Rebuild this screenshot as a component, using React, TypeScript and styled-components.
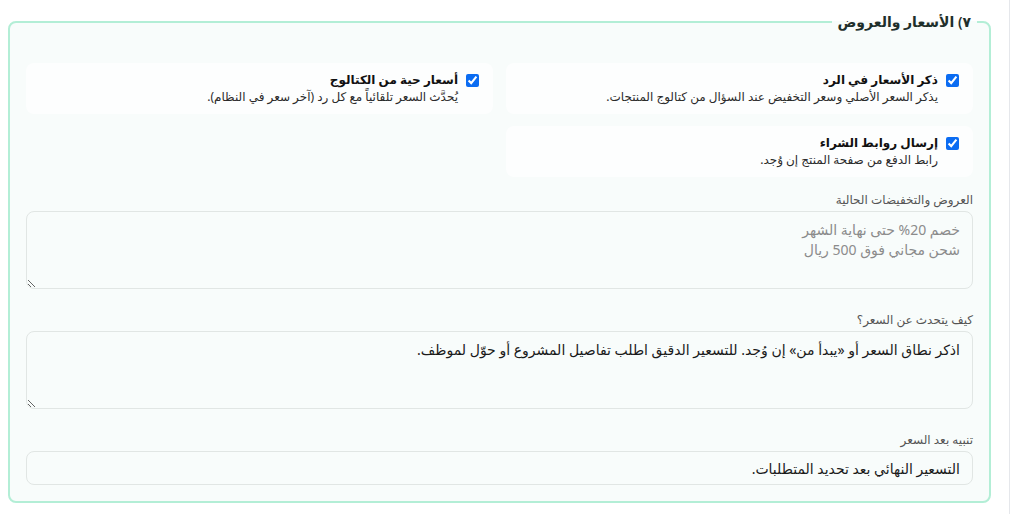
import styled, { createGlobalStyle } from "styled-components";

const GlobalStyle = createGlobalStyle`
  html, body {
    margin: 0;
    background: #ffffff;
  }
  body {
    font-family: "Noto Sans", "DejaVu Sans", sans-serif;
    color: #1f2937;
  }
`;

const options = [
  {
    title: "ذكر الأسعار في الرد",
    desc: "يذكر السعر الأصلي وسعر التخفيض عند السؤال من كتالوج المنتجات.",
  },
  {
    title: "أسعار حية من الكتالوج",
    desc: "يُحدَّث السعر تلقائياً مع كل رد (آخر سعر في النظام).",
  },
  {
    title: "إرسال روابط الشراء",
    desc: "رابط الدفع من صفحة المنتج إن وُجد.",
  },
];

const App = () => {
  return (
    <Page dir="rtl">
      <GlobalStyle />
      <Section>
        <Legend>٧) الأسعار والعروض</Legend>
        <OptionGrid>
          {options.map((opt) => (
            <OptionCard key={opt.title}>
              <Check type="checkbox" defaultChecked />
              <OptionText>
                <OptionTitle>{opt.title}</OptionTitle>
                <OptionDesc>{opt.desc}</OptionDesc>
              </OptionText>
            </OptionCard>
          ))}
        </OptionGrid>

        <Field>
          <Label>العروض والتخفيضات الحالية</Label>
          <TextArea
            placeholder={"خصم 20% حتى نهاية الشهر\nشحن مجاني فوق 500 ريال"}
          />
        </Field>

        <Field>
          <Label>كيف يتحدث عن السعر؟</Label>
          <TextArea defaultValue="اذكر نطاق السعر أو «يبدأ من» إن وُجد. للتسعير الدقيق اطلب تفاصيل المشروع أو حوّل لموظف." />
        </Field>

        <Field>
          <Label>تنبيه بعد السعر</Label>
          <Input defaultValue="التسعير النهائي بعد تحديد المتطلبات." />
        </Field>
      </Section>
    </Page>
  );
};

const Page = styled.div`
  width: 1010px;
  min-height: 514px;
  box-sizing: border-box;
  border-right: 1px solid #e5e7eb;
  padding: 12px 18px 0 8px;
`;

const Section = styled.fieldset`
  margin: 0;
  border: 2px solid #b3eed6;
  border-radius: 8px;
  background: #f8fcfb;
  padding: 31px 16px 16px;
  display: flex;
  flex-direction: column;
`;

const Legend = styled.legend`
  font-size: 14px;
  font-weight: 600;
  color: #1f2f2b;
  padding: 0 6px;
  margin-right: -4px;
  line-height: 20px;
`;

const OptionGrid = styled.div`
  display: grid;
  grid-template-columns: 1fr 1fr;
  gap: 12px 13px;
  margin-bottom: 15px;
`;

const OptionCard = styled.label`
  display: flex;
  align-items: flex-start;
  gap: 8px;
  background: #fdfefe;
  border-radius: 8px;
  padding: 9px 14px 9px;
  min-height: 30px;
`;

const Check = styled.input`
  width: 13px;
  height: 13px;
  margin: 2px 0 0;
  accent-color: #0b6cf2;
  flex-shrink: 0;
`;

const OptionText = styled.div`
  display: flex;
  flex-direction: column;
  gap: 1px;
`;

const OptionTitle = styled.div`
  font-size: 12px;
  font-weight: 700;
  color: #111;
  line-height: 16px;
`;

const OptionDesc = styled.div`
  font-size: 12px;
  color: #2b2b2b;
  line-height: 16px;
`;

const Field = styled.div`
  display: flex;
  flex-direction: column;
  gap: 3px;
  margin-bottom: 23px;

  &:last-child {
    margin-bottom: 0;
  }
`;

const Label = styled.label`
  font-size: 12px;
  color: #555;
  line-height: 16px;
`;

const TextArea = styled.textarea`
  box-sizing: border-box;
  height: 78px;
  width: 100%;
  border: 1px solid #e1e6e4;
  border-radius: 8px;
  background: #f8fcfb;
  padding: 8px 12px;
  font-family: inherit;
  font-size: 14px;
  line-height: 20px;
  color: #1a1a1a;
  resize: vertical;
  outline: none;

  &::placeholder {
    color: #8b8b8b;
  }
`;

const Input = styled.input`
  box-sizing: border-box;
  height: 34px;
  width: 100%;
  border: 1px solid #e1e6e4;
  border-radius: 8px;
  background: #f8fcfb;
  padding: 0 12px;
  font-family: inherit;
  font-size: 14px;
  color: #1a1a1a;
  outline: none;
`;

export default App;
